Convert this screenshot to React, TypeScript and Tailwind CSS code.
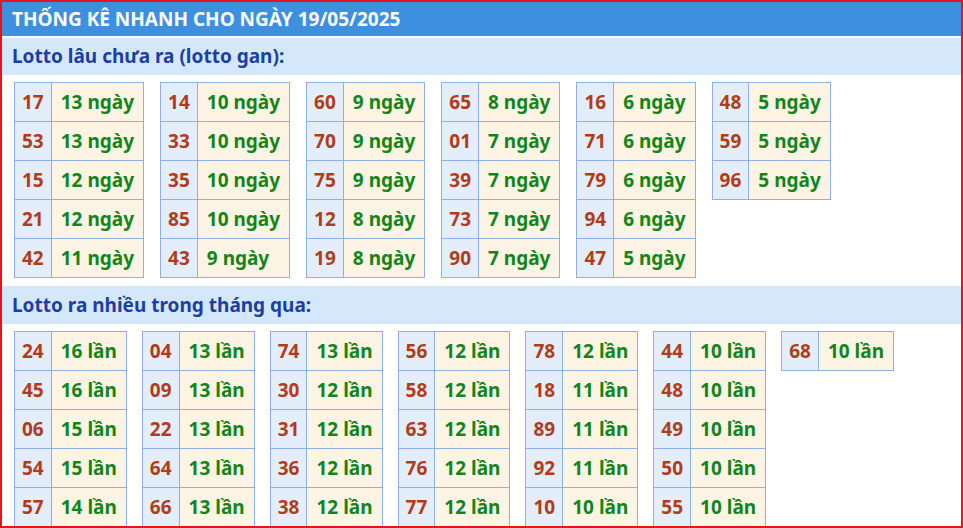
const gan: [string, string][][] = [
  [["17","13"],["53","13"],["15","12"],["21","12"],["42","11"]],
  [["14","10"],["33","10"],["35","10"],["85","10"],["43","9"]],
  [["60","9"],["70","9"],["75","9"],["12","8"],["19","8"]],
  [["65","8"],["01","7"],["39","7"],["73","7"],["90","7"]],
  [["16","6"],["71","6"],["79","6"],["94","6"],["47","5"]],
  [["48","5"],["59","5"],["96","5"]],
];
const nhieu: [string, string][][] = [
  [["24","16"],["45","16"],["06","15"],["54","15"],["57","14"]],
  [["04","13"],["09","13"],["22","13"],["64","13"],["66","13"]],
  [["74","13"],["30","12"],["31","12"],["36","12"],["38","12"]],
  [["56","12"],["58","12"],["63","12"],["76","12"],["77","12"]],
  [["78","12"],["18","11"],["89","11"],["92","11"],["10","10"]],
  [["44","10"],["48","10"],["49","10"],["50","10"],["55","10"]],
  [["68","10"]],
];

function Group({ data, unit, gap }: { data: [string, string][][]; unit: string; gap: string }) {
  return (
    <div className={`flex items-start px-[12px] pt-[7px] pb-[8px] ${gap}`}>
      {data.map((t, i) => (
        <table key={i} className="border-collapse">
          <tbody>
            {t.map(([n, v], j) => (
              <tr key={j} className="h-[39px]">
                <td className="border border-[#8fb0e6] bg-[#e4eefb] text-[#b23b1a] px-[7px] text-center">{n}</td>
                <td className="border border-[#8fb0e6] bg-[#fdf4e3] text-[#12851a] px-[9px] whitespace-nowrap">{v} {unit}</td>
              </tr>
            ))}
          </tbody>
        </table>
      ))}
    </div>
  );
}

export default function App() {
  return (
    <div className="h-[528px] overflow-hidden border-2 border-[#e8141b] bg-white font-['Liberation_Sans'] font-bold text-[19px]">
      <div className="h-[34px] bg-[#3d8fe0] text-white flex items-center px-[10px] text-[19px]">THỐNG KÊ NHANH CHO NGÀY 19/05/2025</div>
      <div className="mt-[2px] h-[37px] bg-[#d5e7fb] text-[#1a40a3] flex items-center px-[10px]">Lotto lâu chưa ra (lotto gan):</div>
      <Group data={gan} unit="ngày" gap="gap-[16px]" />
      <div className="h-[38px] bg-[#d5e7fb] text-[#1a40a3] flex items-center px-[10px]">Lotto ra nhiều trong tháng qua:</div>
      <Group data={nhieu} unit="lần" gap="gap-[15px]" />
    </div>
  );
}
